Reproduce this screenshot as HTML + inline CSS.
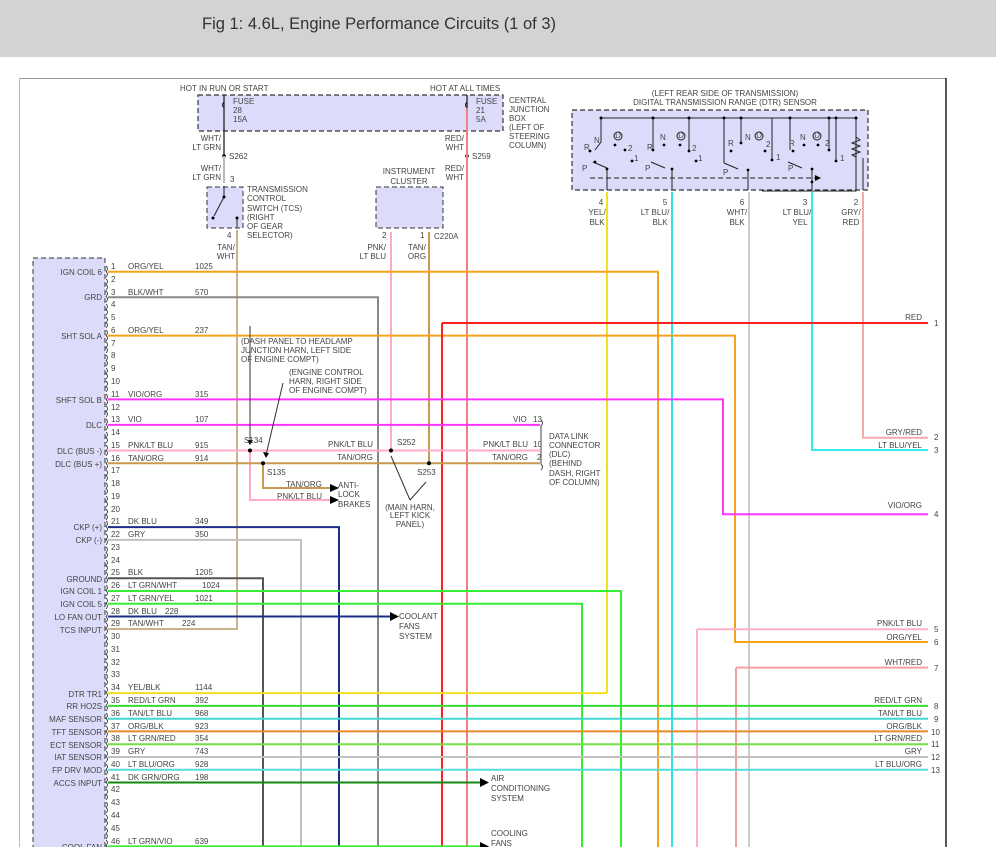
<!DOCTYPE html>
<html><head><meta charset="utf-8"><style>
html,body{margin:0;padding:0;background:#fff;width:996px;height:857px;overflow:hidden}
.hdr{position:absolute;left:0;top:0;width:996px;height:57px;background:#d3d3d3}
.hdr span{position:absolute;left:202px;top:15px;font:16.5px "Liberation Sans",sans-serif;color:#333}
svg{position:absolute;left:0;top:0}
text{font-family:"Liberation Sans",sans-serif;font-size:8px;fill:#444}
.r{text-anchor:end}.m{text-anchor:middle}
</style></head><body>
<div class="hdr"><span>Fig 1: 4.6L, Engine Performance Circuits (1 of 3)</span></div>
<svg width="996" height="857" viewBox="0 0 996 857">
<line x1="19.5" y1="78.5" x2="946" y2="78.5" stroke="#999"/>
<line x1="19.5" y1="78.5" x2="19.5" y2="857" stroke="#bbb"/>
<line x1="946" y1="78" x2="946" y2="857" stroke="#000" stroke-width="1.3"/>

<!-- ECM box -->
<rect x="33" y="258" width="72" height="600" fill="#dcdcfa" stroke="#333" stroke-dasharray="5,3"/>

<!-- fuse box -->
<rect x="198" y="95" width="305" height="36" fill="#dcdcfa" stroke="#333" stroke-width="1.2" stroke-dasharray="5,3"/>
<text x="180" y="91">HOT IN RUN OR START</text><text x="430" y="91">HOT AT ALL TIMES</text>
<line x1="224" y1="95" x2="224" y2="156" stroke="#222" stroke-width="1.3"/>
<line x1="467" y1="95" x2="467" y2="108" stroke="#222" stroke-width="1.3"/>
<path d="M224,102 q-3,3 0,6 M467,102 q-3,3 0,6" fill="none" stroke="#222"/>
<text x="233" y="104">FUSE</text><text x="233" y="113">28</text><text x="233" y="122">15A</text>
<text x="476" y="104">FUSE</text><text x="476" y="113">21</text><text x="476" y="122">5A</text>
<text x="509" y="103">CENTRAL</text><text x="509" y="112">JUNCTION</text><text x="509" y="121">BOX</text><text x="509" y="130">(LEFT OF</text><text x="509" y="139">STEERING</text><text x="509" y="148">COLUMN)</text>
<text class="r" x="221" y="141">WHT/</text><text class="r" x="221" y="150">LT GRN</text>
<text class="r" x="464" y="141">RED/</text><text class="r" x="464" y="150">WHT</text>
<circle cx="224" cy="156" r="1.8" fill="#000"/><text x="229" y="159">S262</text>
<circle cx="467" cy="156" r="1.8" fill="#000"/><text x="472" y="159">S259</text>
<line x1="224" y1="156" x2="224" y2="183" stroke="#bbb" stroke-width="2"/>
<text class="r" x="221" y="171">WHT/</text><text class="r" x="221" y="180">LT GRN</text><text x="230" y="182">3</text>
<text class="r" x="464" y="171">RED/</text><text class="r" x="464" y="180">WHT</text>
<line x1="467" y1="108" x2="467" y2="857" stroke="#f08080" stroke-width="2"/>

<!-- TCS -->
<rect x="207" y="187" width="36" height="41" fill="#dcdcfa" stroke="#333" stroke-dasharray="5,3"/>
<path d="M224,186 l0,11 M224,197 l-10,19 M237,218 l0,10" stroke="#222" fill="none"/>
<circle cx="224" cy="197" r="1.5"/><circle cx="213" cy="218" r="1.5"/><circle cx="237" cy="218" r="1.5"/>
<text x="247" y="192">TRANSMISSION</text><text x="247" y="201">CONTROL</text><text x="247" y="211">SWITCH (TCS)</text><text x="247" y="220">(RIGHT</text><text x="247" y="229">OF GEAR</text><text x="247" y="238">SELECTOR)</text>
<text x="227" y="238">4</text>
<text class="m" x="226" y="250">TAN/</text><text class="m" x="226" y="259">WHT</text>
<path d="M237,230 L237,629 L108,629" stroke="#c8b48c" stroke-width="2" fill="none"/>

<!-- instrument cluster -->
<rect x="376" y="187" width="67" height="41" fill="#dcdcfa" stroke="#333" stroke-dasharray="5,3"/>
<text class="m" x="409" y="174">INSTRUMENT</text><text class="m" x="409" y="184">CLUSTER</text>
<text x="382" y="238">2</text><text x="420" y="238">1</text><text x="434" y="239">C220A</text>
<text class="r" x="386" y="250">PNK/</text><text class="r" x="386" y="259">LT BLU</text>
<text class="m" x="417" y="250">TAN/</text><text class="m" x="417" y="259">ORG</text>
<line x1="391" y1="232" x2="391" y2="450" stroke="#ffaacc" stroke-width="2"/>
<line x1="429" y1="232" x2="429" y2="463" stroke="#c89a50" stroke-width="2"/>

<!-- DTR sensor -->
<text class="m" x="725" y="96">(LEFT REAR SIDE OF TRANSMISSION)</text>
<text class="m" x="725" y="105">DIGITAL TRANSMISSION RANGE (DTR) SENSOR</text>
<rect x="572" y="110" width="296" height="80" fill="#dcdcfa" stroke="#333" stroke-width="1.2" stroke-dasharray="5,3"/>
<g stroke="#222" fill="none">
<path d="M601,118 L856,118 M601,118 v24 l-6,8 M653,118 v31 M689,118 v33 M724,118 v45 M741,118 v24 M772,118 v42 M790,118 v32 M829,118 v32 M836,118 v44 M856,118 v40 M856,158 v33 l-94,0"/>
<path d="M856,137 l4,3 -8,3 8,3 -8,3 8,3 -8,3 4,2"/>
<path d="M590,178 L820,178" stroke-dasharray="5,3"/>
<path d="M593,162 l14,6 M651,162 l14,6 M724,163 l14,6 M788,162 l14,6"/>
<path d="M607,168 v22 M672,168 v22 M748,170 v20 M812,168 v22 M863,158 v32"/>
</g>
<path d="M815,175 l6,3 -6,3z"/>
<g fill="#000">
<circle cx="601" cy="118" r="1.5"/><circle cx="653" cy="118" r="1.5"/><circle cx="689" cy="118" r="1.5"/><circle cx="724" cy="118" r="1.5"/><circle cx="741" cy="118" r="1.5"/><circle cx="790" cy="118" r="1.5"/><circle cx="829" cy="118" r="1.5"/><circle cx="836" cy="118" r="1.5"/><circle cx="856" cy="118" r="1.5"/>
<circle cx="590" cy="151" r="1.4"/><circle cx="595" cy="162" r="1.4"/><circle cx="615" cy="145" r="1.4"/><circle cx="632" cy="161" r="1.4"/><circle cx="625" cy="150" r="1.4"/>
<circle cx="653" cy="150" r="1.4"/><circle cx="664" cy="145" r="1.4"/><circle cx="680" cy="145" r="1.4"/><circle cx="696" cy="161" r="1.4"/><circle cx="689" cy="151" r="1.4"/>
<circle cx="731" cy="151" r="1.4"/><circle cx="741" cy="143" r="1.4"/><circle cx="765" cy="151" r="1.4"/><circle cx="772" cy="160" r="1.4"/>
<circle cx="793" cy="151" r="1.4"/><circle cx="804" cy="145" r="1.4"/><circle cx="818" cy="145" r="1.4"/><circle cx="836" cy="161" r="1.4"/><circle cx="829" cy="150" r="1.4"/>
<circle cx="607" cy="169" r="1.4"/><circle cx="672" cy="169" r="1.4"/><circle cx="748" cy="170" r="1.4"/><circle cx="812" cy="169" r="1.4"/><circle cx="812" cy="182" r="1.4"/>
</g>
<g font-size="8">
<text x="594" y="143">N</text><text x="584" y="150">R</text><text x="582" y="171">P</text><text x="628" y="151">2</text><text x="634" y="161">1</text>
<text x="660" y="140">N</text><text x="647" y="150">R</text><text x="645" y="171">P</text><text x="692" y="151">2</text><text x="698" y="161">1</text>
<text x="745" y="140">N</text><text x="728" y="146">R</text><text x="723" y="175">P</text><text x="766" y="147">2</text><text x="776" y="160">1</text>
<text x="800" y="140">N</text><text x="789" y="146">R</text><text x="788" y="171">P</text><text x="825" y="146">2</text><text x="840" y="161">1</text>
</g>
<g fill="none" stroke="#222"><circle cx="618" cy="136" r="4"/><circle cx="681" cy="136" r="4"/><circle cx="759" cy="136" r="4"/><circle cx="817" cy="136" r="4"/></g>
<g font-size="6"><text class="m" x="618" y="138">D</text><text class="m" x="681" y="138">D</text><text class="m" x="759" y="138">D</text><text class="m" x="817" y="138">D</text></g>
<text class="m" x="601" y="205">4</text><text class="m" x="597" y="215">YEL/</text><text class="m" x="597" y="225">BLK</text>
<text class="m" x="665" y="205">5</text><text class="m" x="655" y="215">LT BLU/</text><text class="m" x="660" y="225">BLK</text>
<text class="m" x="742" y="205">6</text><text class="m" x="737" y="215">WHT/</text><text class="m" x="737" y="225">BLK</text>
<text class="m" x="805" y="205">3</text><text class="m" x="797" y="215">LT BLU/</text><text class="m" x="800" y="225">YEL</text>
<text class="m" x="856" y="205">2</text><text class="m" x="851" y="215">GRY/</text><text class="m" x="851" y="225">RED</text>
<line x1="607" y1="192" x2="607" y2="693" stroke="#f0e020" stroke-width="2"/>
<line x1="672" y1="192" x2="672" y2="857" stroke="#33e0e0" stroke-width="2"/>
<line x1="749" y1="192" x2="749" y2="857" stroke="#ccc" stroke-width="2"/>
<path d="M812,192 V450 H928" stroke="#33eeee" stroke-width="2" fill="none"/>
<path d="M863,192 V437.7 H928" stroke="#f4aaaa" stroke-width="2" fill="none"/>

<!-- long wires -->
<g fill="none" stroke-width="2">
<path d="M108,271.7 H658 V857" stroke="#f7a21b"/>
<path d="M108,297.2 H378 V857" stroke="#888"/>
<path d="M108,335.6 H735 V642 H928" stroke="#f7a21b"/>
<path d="M442,323 H928 M442,323 V857" stroke="#ff2020"/>
<path d="M108,399.4 H723 V514.3 H928" stroke="#ff33ff"/>
<path d="M108,424.9 H540" stroke="#ff33ff"/>
<path d="M108,450.5 H540 M250,450 V500 H330" stroke="#ffaacc"/>
<path d="M108,463.3 H540 M263,463 V488 H330" stroke="#c89a50"/>
<path d="M108,527.1 H339 V857" stroke="#1a2f8a"/>
<path d="M108,539.9 H301 V857" stroke="#c0c0c0"/>
<path d="M108,578.2 H263 V857" stroke="#555"/>
<path d="M108,591 H621 V857" stroke="#33ee33"/>
<path d="M108,603.7 H582 V857" stroke="#33ee33"/>
<path d="M108,616.5 H390" stroke="#1a2f8a"/>
<path d="M108,693.1 H607" stroke="#f0e020"/>
<path d="M697,629.3 H928 M697,629.3 V857" stroke="#ffb0c8"/>
<path d="M736,667.6 H928 M736,667.6 V857" stroke="#f4a0a0"/>
<path d="M108,705.9 H928" stroke="#33dd33"/>
<path d="M108,718.7 H928" stroke="#40d8d0"/>
<path d="M108,731.4 H928" stroke="#e8892a"/>
<path d="M108,744.2 H928" stroke="#77dd44"/>
<path d="M108,757 H928" stroke="#c0c0c0"/>
<path d="M108,769.7 H928" stroke="#55dddd"/>
<path d="M108,782.5 H480" stroke="#118811"/>
<path d="M108,846.4 H480" stroke="#33ee33"/>
</g>
<!-- splices -->
<g fill="#000">
<circle cx="250" cy="450.5" r="2"/><circle cx="263" cy="463.3" r="2"/><circle cx="391" cy="450.5" r="2"/><circle cx="429" cy="463.3" r="2"/>
<path d="M330,496 l9,4 -9,4z M330,484 l9,4 -9,4z M390,612 l9,4.5 -9,4.5z M480,778 l9,4.5 -9,4.5z M480,842 l9,4.5 -9,4.5z"/>
</g>
<g stroke="#333" fill="none"><path d="M250,326 V443 M283,383 L266,455 M410,500 L391,456 M410,500 L426,482"/></g>
<path d="M247,440 l3,5 3,-5z M263,452 l3,6 3,-5z"/>
<text x="241" y="344">(DASH PANEL TO HEADLAMP</text><text x="241" y="353">JUNCTION HARN, LEFT SIDE</text><text x="241" y="362">OF ENGINE COMPT)</text>
<text x="289" y="375">(ENGINE CONTROL</text><text x="289" y="384">HARN, RIGHT SIDE</text><text x="289" y="393">OF ENGINE COMPT)</text>
<text x="244" y="443">S134</text><text x="267" y="475">S135</text><text x="397" y="445">S252</text><text x="417" y="475">S253</text>
<text x="328" y="447">PNK/LT BLU</text><text x="337" y="460">TAN/ORG</text>
<text x="286" y="487">TAN/ORG</text><text x="277" y="499">PNK/LT BLU</text>
<text x="338" y="488">ANTI-</text><text x="338" y="497">LOCK</text><text x="338" y="507">BRAKES</text>
<text class="m" x="410" y="510">(MAIN HARN,</text><text class="m" x="410" y="518">LEFT KICK</text><text class="m" x="410" y="527">PANEL)</text>
<text x="513" y="422">VIO</text><text x="533" y="422">13</text><text x="483" y="447">PNK/LT BLU</text><text x="533" y="447">10</text><text x="492" y="460">TAN/ORG</text><text x="537" y="460">2</text>
<path d="M541,420 q3,3 0,6 v38 q3,3 0,6" stroke="#444" fill="none"/>
<text x="549" y="439">DATA LINK</text><text x="549" y="448">CONNECTOR</text><text x="549" y="457">(DLC)</text><text x="549" y="466">(BEHIND</text><text x="549" y="476">DASH, RIGHT</text><text x="549" y="485">OF COLUMN)</text>
<text x="399" y="619">COOLANT</text><text x="399" y="629">FANS</text><text x="399" y="639">SYSTEM</text>
<text x="491" y="781">AIR</text><text x="491" y="791">CONDITIONING</text><text x="491" y="801">SYSTEM</text>
<text x="491" y="836">COOLING</text><text x="491" y="846">FANS</text>

<!-- right pins -->
<g>
<text class="r" x="922" y="320">RED</text><text x="934" y="326">1</text>
<text class="r" x="922" y="435">GRY/RED</text><text x="934" y="440">2</text>
<text class="r" x="922" y="448">LT BLU/YEL</text><text x="934" y="453">3</text>
<text class="r" x="922" y="508">VIO/ORG</text><text x="934" y="517">4</text>
<text class="r" x="922" y="626">PNK/LT BLU</text><text x="934" y="632">5</text>
<text class="r" x="922" y="640">ORG/YEL</text><text x="934" y="645">6</text>
<text class="r" x="922" y="665">WHT/RED</text><text x="934" y="671">7</text>
<text class="r" x="922" y="703">RED/LT GRN</text><text x="934" y="709">8</text>
<text class="r" x="922" y="716">TAN/LT BLU</text><text x="934" y="722">9</text>
<text class="r" x="922" y="729">ORG/BLK</text><text x="931" y="735">10</text>
<text class="r" x="922" y="741">LT GRN/RED</text><text x="931" y="747">11</text>
<text class="r" x="922" y="754">GRY</text><text x="931" y="760">12</text>
<text class="r" x="922" y="767">LT BLU/ORG</text><text x="931" y="773">13</text>
</g>

<!-- ECM pin brackets + numbers -->
<g stroke="#333" fill="none" stroke-width="0.9">
<path d="M106,266 q3,2.5 0,5.5 q3,2.5 0,5.5 M106,279 q3,2.5 0,5.5 q3,2.5 0,5.5 M106,291 q3,2.5 0,5.5 q3,2.5 0,5.5 M106,304 q3,2.5 0,5.5 q3,2.5 0,5.5 M106,317 q3,2.5 0,5.5 q3,2.5 0,5.5 M106,330 q3,2.5 0,5.5 q3,2.5 0,5.5 M106,342 q3,2.5 0,5.5 q3,2.5 0,5.5 M106,355 q3,2.5 0,5.5 q3,2.5 0,5.5 M106,368 q3,2.5 0,5.5 q3,2.5 0,5.5 M106,381 q3,2.5 0,5.5 q3,2.5 0,5.5 M106,394 q3,2.5 0,5.5 q3,2.5 0,5.5 M106,406 q3,2.5 0,5.5 q3,2.5 0,5.5 M106,419 q3,2.5 0,5.5 q3,2.5 0,5.5 M106,432 q3,2.5 0,5.5 q3,2.5 0,5.5 M106,445 q3,2.5 0,5.5 q3,2.5 0,5.5 M106,458 q3,2.5 0,5.5 q3,2.5 0,5.5 M106,470 q3,2.5 0,5.5 q3,2.5 0,5.5 M106,483 q3,2.5 0,5.5 q3,2.5 0,5.5 M106,496 q3,2.5 0,5.5 q3,2.5 0,5.5 M106,509 q3,2.5 0,5.5 q3,2.5 0,5.5 M106,521 q3,2.5 0,5.5 q3,2.5 0,5.5 M106,534 q3,2.5 0,5.5 q3,2.5 0,5.5 M106,547 q3,2.5 0,5.5 q3,2.5 0,5.5 M106,560 q3,2.5 0,5.5 q3,2.5 0,5.5 M106,572 q3,2.5 0,5.5 q3,2.5 0,5.5 M106,585 q3,2.5 0,5.5 q3,2.5 0,5.5 M106,598 q3,2.5 0,5.5 q3,2.5 0,5.5 M106,611 q3,2.5 0,5.5 q3,2.5 0,5.5 M106,623 q3,2.5 0,5.5 q3,2.5 0,5.5 M106,636 q3,2.5 0,5.5 q3,2.5 0,5.5 M106,649 q3,2.5 0,5.5 q3,2.5 0,5.5 M106,662 q3,2.5 0,5.5 q3,2.5 0,5.5 M106,674 q3,2.5 0,5.5 q3,2.5 0,5.5 M106,687 q3,2.5 0,5.5 q3,2.5 0,5.5 M106,700 q3,2.5 0,5.5 q3,2.5 0,5.5 M106,713 q3,2.5 0,5.5 q3,2.5 0,5.5 M106,726 q3,2.5 0,5.5 q3,2.5 0,5.5 M106,738 q3,2.5 0,5.5 q3,2.5 0,5.5 M106,751 q3,2.5 0,5.5 q3,2.5 0,5.5 M106,764 q3,2.5 0,5.5 q3,2.5 0,5.5 M106,777 q3,2.5 0,5.5 q3,2.5 0,5.5 M106,789 q3,2.5 0,5.5 q3,2.5 0,5.5 M106,802 q3,2.5 0,5.5 q3,2.5 0,5.5 M106,815 q3,2.5 0,5.5 q3,2.5 0,5.5 M106,828 q3,2.5 0,5.5 q3,2.5 0,5.5 M106,840 q3,2.5 0,5.5 q3,2.5 0,5.5"/>
</g>
<g>
<text x="111" y="269">1</text><text x="111" y="282">2</text><text x="111" y="295">3</text><text x="111" y="307">4</text><text x="111" y="320">5</text><text x="111" y="333">6</text><text x="111" y="346">7</text><text x="111" y="358">8</text><text x="111" y="371">9</text><text x="111" y="384">10</text>
<text x="111" y="397">11</text><text x="111" y="410">12</text><text x="111" y="422">13</text><text x="111" y="435">14</text><text x="111" y="448">15</text><text x="111" y="461">16</text><text x="111" y="473">17</text><text x="111" y="486">18</text><text x="111" y="499">19</text><text x="111" y="512">20</text>
<text x="111" y="524">21</text><text x="111" y="537">22</text><text x="111" y="550">23</text><text x="111" y="563">24</text><text x="111" y="575">25</text><text x="111" y="588">26</text><text x="111" y="601">27</text><text x="111" y="614">28</text><text x="111" y="626">29</text><text x="111" y="639">30</text>
<text x="111" y="652">31</text><text x="111" y="665">32</text><text x="111" y="677">33</text><text x="111" y="690">34</text><text x="111" y="703">35</text><text x="111" y="716">36</text><text x="111" y="729">37</text><text x="111" y="741">38</text><text x="111" y="754">39</text><text x="111" y="767">40</text>
<text x="111" y="780">41</text><text x="111" y="792">42</text><text x="111" y="805">43</text><text x="111" y="818">44</text><text x="111" y="831">45</text><text x="111" y="844">46</text>
</g>
<g>
<text x="128" y="269">ORG/YEL</text><text x="195" y="269">1025</text>
<text x="128" y="295">BLK/WHT</text><text x="195" y="295">570</text>
<text x="128" y="333">ORG/YEL</text><text x="195" y="333">237</text>
<text x="128" y="397">VIO/ORG</text><text x="195" y="397">315</text>
<text x="128" y="422">VIO</text><text x="195" y="422">107</text>
<text x="128" y="448">PNK/LT BLU</text><text x="195" y="448">915</text>
<text x="128" y="461">TAN/ORG</text><text x="195" y="461">914</text>
<text x="128" y="524">DK BLU</text><text x="195" y="524">349</text>
<text x="128" y="537">GRY</text><text x="195" y="537">350</text>
<text x="128" y="575">BLK</text><text x="195" y="575">1205</text>
<text x="128" y="588">LT GRN/WHT</text><text x="202" y="588">1024</text>
<text x="128" y="601">LT GRN/YEL</text><text x="195" y="601">1021</text>
<text x="128" y="614">DK BLU</text><text x="165" y="614">228</text>
<text x="128" y="626">TAN/WHT</text><text x="182" y="626">224</text>
<text x="128" y="690">YEL/BLK</text><text x="195" y="690">1144</text>
<text x="128" y="703">RED/LT GRN</text><text x="195" y="703">392</text>
<text x="128" y="716">TAN/LT BLU</text><text x="195" y="716">968</text>
<text x="128" y="729">ORG/BLK</text><text x="195" y="729">923</text>
<text x="128" y="741">LT GRN/RED</text><text x="195" y="741">354</text>
<text x="128" y="754">GRY</text><text x="195" y="754">743</text>
<text x="128" y="767">LT BLU/ORG</text><text x="195" y="767">928</text>
<text x="128" y="780">DK GRN/ORG</text><text x="195" y="780">198</text>
<text x="128" y="844">LT GRN/VIO</text><text x="195" y="844">639</text>
</g>
<g>
<text class="r" x="102" y="275">IGN COIL 6</text><text class="r" x="102" y="300">GRD</text><text class="r" x="102" y="339">SHT SOL A</text>
<text class="r" x="102" y="403">SHFT SOL B</text><text class="r" x="102" y="428">DLC</text><text class="r" x="102" y="454">DLC (BUS -)</text><text class="r" x="102" y="467">DLC (BUS +)</text>
<text class="r" x="102" y="530">CKP (+)</text><text class="r" x="102" y="543">CKP (-)</text>
<text class="r" x="102" y="582">GROUND</text><text class="r" x="102" y="594">IGN COIL 1</text><text class="r" x="102" y="607">IGN COIL 5</text><text class="r" x="102" y="620">LO FAN OUT</text><text class="r" x="102" y="633">TCS INPUT</text>
<text class="r" x="102" y="697">DTR TR1</text><text class="r" x="102" y="709">RR HO2S</text><text class="r" x="102" y="722">MAF SENSOR</text><text class="r" x="102" y="735">TFT SENSOR</text><text class="r" x="102" y="748">ECT SENSOR</text><text class="r" x="102" y="760">IAT SENSOR</text><text class="r" x="102" y="773">FP DRV MOD</text><text class="r" x="102" y="786">ACCS INPUT</text>
<text class="r" x="102" y="850">COOL FAN</text>
</g>
<rect x="0" y="847" width="996" height="10" fill="#fff"/>
</svg>
</body></html>
